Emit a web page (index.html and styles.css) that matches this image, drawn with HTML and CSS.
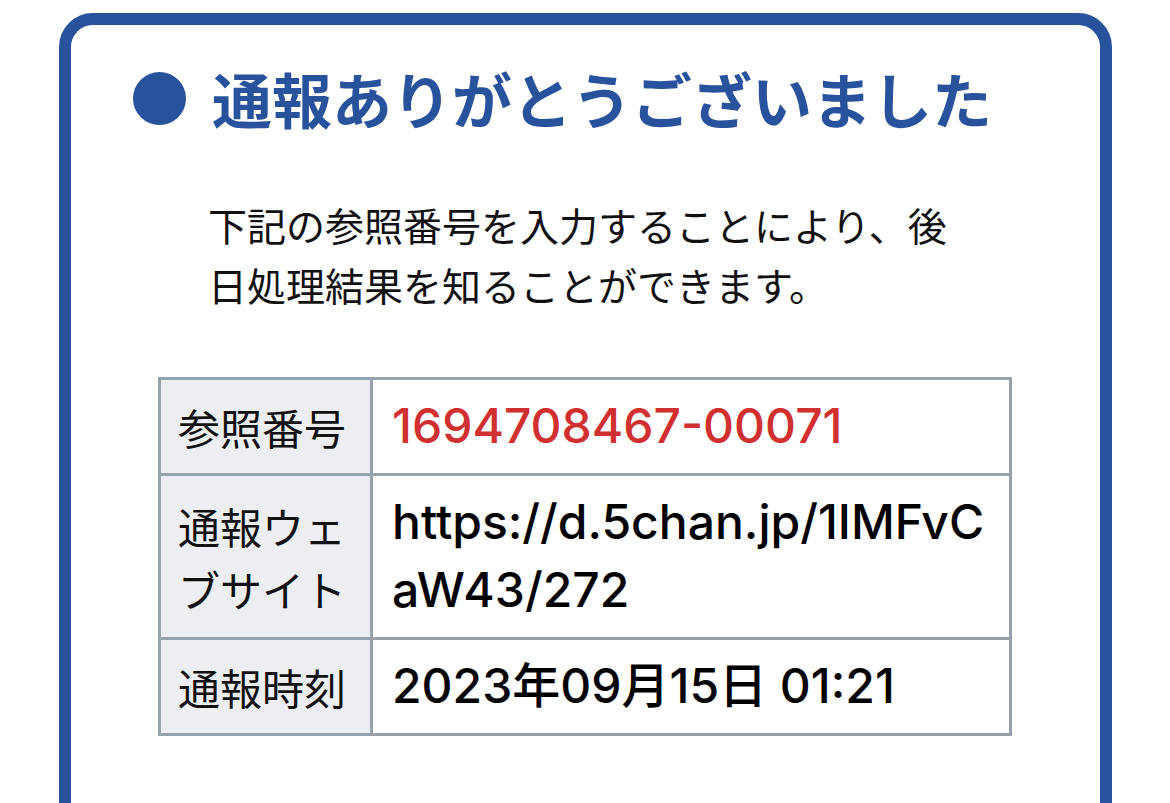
FILE: index.html
```html
<!doctype html>
<html lang="ja">
<head>
  <meta charset="utf-8">
  <link rel="stylesheet" href="styles.css">
</head>
<body>
  <div class="card">
    <h1 class="title"><span class="bullet"></span>通報ありがとうございました</h1>
    <p class="lead">下記の参照番号を入力することにより、後日処理結果を知ることができます。</p>
    <table class="report">
      <tr>
        <th>参照番号</th>
        <td class="ref-no">1694708467-00071</td>
      </tr>
      <tr>
        <th>通報ウェブサイト</th>
        <td class="url">https://d.5chan.jp/1IMFvCaW43/272</td>
      </tr>
      <tr>
        <th>通報時刻</th>
        <td>2023年09月15日 01:21</td>
      </tr>
    </table>
  </div>
</body>
</html>
```

FILE: styles.css
```css
body {
  margin: 0;
  background: #fff;
  font-family: "Noto Sans CJK JP", sans-serif;
  color: #111;
}
.card {
  margin: 13px 0 0 59px;
  width: 1053px;
  min-height: 900px;
  box-sizing: border-box;
  border: 12px solid #28529b;
  border-radius: 34px;
  padding: 31px 0 0 62px;
}
.title {
  display: flex;
  align-items: center;
  gap: 26px;
  margin: 0;
  font-size: 60px;
  line-height: 84px;
  font-weight: 700;
  color: #28529b;
}
.bullet {
  width: 53px;
  height: 53px;
  border-radius: 50%;
  background: #28529b;
  flex: none;
}
.lead {
  margin: 54px 0 0 75px;
  width: 760px;
  font-size: 39px;
  line-height: 60px;
}
.report {
  margin: 63px 0 0 25px;
  width: 854px;
  border-collapse: collapse;
  table-layout: fixed;
}
.report th,
.report td {
  border: 3px solid #95a1ab;
  vertical-align: middle;
  text-align: left;
}
.report th {
  width: 175px;
  padding: 12px 17px;
  background: #eceef1;
  font-size: 42px;
  line-height: 63px;
  font-weight: 400;
}
.report td {
  padding: 12px 19px 13px;
  font-family: Inter, "Noto Sans CJK JP", sans-serif;
  font-size: 48px;
  line-height: 68px;
  font-weight: 500;
  color: #000;
}
.report .ref-no {
  color: #d0302f;
}
.report .url {
  word-break: break-all;
}
```
